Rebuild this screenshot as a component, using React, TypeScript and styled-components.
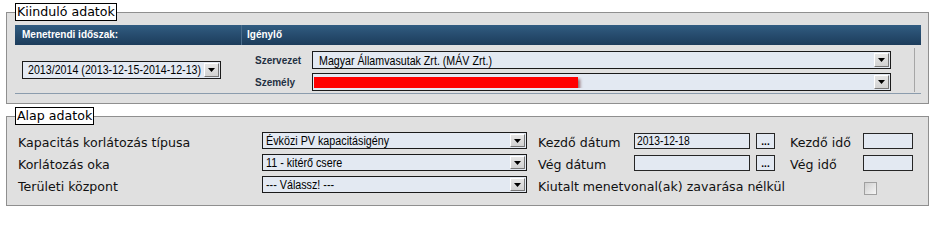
import React from "react";
import styled, { createGlobalStyle } from "styled-components";

const Global = createGlobalStyle`
  html, body { margin: 0; padding: 0; background: #fff; }
  body { font-family: "DejaVu Sans", Verdana, sans-serif; }
`;

const Page = styled.div`
  width: 932px;
  box-sizing: border-box;
  padding: 3px 3px 0 6px;
  display: flex;
  flex-direction: column;
  gap: 3px;
`;

const Group = styled.fieldset<{ $pt: number; $pb: number }>`
  margin: 0;
  min-width: 0;
  border: 1px solid #8f8f8f;
  background: #e0e0e0;
  padding: ${(p) => p.$pt}px 7px ${(p) => p.$pb}px 8px;
`;

const Legend = styled.legend`
  margin: 0;
  padding: 0 1px;
  background: #fff;
  border: 1px solid #000;
  color: #000;
  font: 12.6px/16px "DejaVu Sans", Verdana, sans-serif;
`;

/* ---------- Kiinduló adatok table ---------- */

const Table = styled.div`
  display: flex;
  flex-direction: column;
  border-bottom: 1px solid #8b9cad;
`;

const HeadRow = styled.div`
  display: grid;
  grid-template-columns: 226px 1fr;
  height: 20px;
  background: linear-gradient(#315c81, #1c3c5b);
  color: #fff;
  font: bold 10px/20px "Liberation Sans", Arial, sans-serif;
`;

const HeadCell = styled.div<{ $sep?: boolean }>`
  padding-left: ${(p) => (p.$sep ? 5 : 7)}px;
  border-left: ${(p) => (p.$sep ? "1px solid #4b6d8c" : "none")};
`;

const BodyRow = styled.div`
  display: grid;
  grid-template-columns: 226px 1fr;
  height: 48px;
`;

const PeriodCell = styled.div`
  display: flex;
  align-items: center;
  padding: 1px 0 0 7px;
`;

const RequesterCell = styled.div`
  padding: 3px 6px 0 0;
`;

const RequesterGrid = styled.div`
  display: grid;
  grid-template-columns: 57px 579px;
  row-gap: 4px;
  align-items: center;
  padding: 3px 0 1px 14px;
  border-right: 1px solid #a6a6a6;
`;

const SmallLabel = styled.span`
  font: bold 10px "Liberation Sans", Arial, sans-serif;
  color: #1f3043;
  white-space: nowrap;
`;

/* ---------- select look-alike ---------- */

const SelectBox = styled.div<{ $w: number; $h: number; $fs: number; $pl: number }>`
  box-sizing: border-box;
  width: ${(p) => p.$w}px;
  height: ${(p) => p.$h}px;
  border: 1px solid #1a1a1a;
  background: #e3e9f2;
  display: flex;
  align-items: center;
  padding-left: ${(p) => p.$pl}px;
  font: ${(p) => p.$fs}px "Liberation Sans", Arial, sans-serif;
  color: #000;
`;

const SelectText = styled.span`
  flex: 1;
  min-width: 0;
  white-space: nowrap;
  overflow: hidden;
  display: flex;
  align-items: center;
`;

/* Arial Narrow look: the narrow face is not installed, so the sans face is condensed */
const Narrow = styled.span<{ $sx: number }>`
  display: inline-block;
  white-space: nowrap;
  transform: scaleX(${(p) => p.$sx});
  transform-origin: left center;
`;

const ArrowBtn = styled.span`
  flex: none;
  box-sizing: border-box;
  width: 15px;
  height: calc(100% - 2px);
  margin-right: 1px;
  background: linear-gradient(#e6e6e6, #d2d2d2);
  border-top: 1px solid #fff;
  border-left: 1px solid #fff;
  border-right: 1px solid #777;
  border-bottom: 1px solid #777;
  display: flex;
  align-items: center;
  justify-content: center;
`;

const Redaction = styled.span`
  display: block;
  width: 264px;
  height: 11px;
  background: #ff0000;
  box-shadow: 2px 2px 3px rgba(70, 0, 0, 0.55);
`;

type SelectProps = {
  w: number;
  h: number;
  fs: number;
  pl: number;
  sx?: number;
  text?: string;
  children?: React.ReactNode;
};

const Select = ({ w, h, fs, pl, sx = 0.82, text, children }: SelectProps) => (
  <SelectBox $w={w} $h={h} $fs={fs} $pl={pl}>
    <SelectText>{text !== undefined ? <Narrow $sx={sx}>{text}</Narrow> : children}</SelectText>
    <ArrowBtn>
      <svg width="7" height="4" viewBox="0 0 7 4">
        <polygon points="0,0 7,0 3.5,4" fill="#000" />
      </svg>
    </ArrowBtn>
  </SelectBox>
);

/* ---------- Alap adatok form ---------- */

const FormGrid = styled.div`
  display: grid;
  grid-template-columns:
    [l1] 244px [sel] 265px 11px [l2] 96px [date] 116px 6px [btn] 19px 15px [l3] 73px [time] 50px [end];
  grid-auto-rows: 22px;
  padding-left: 3px;
`;

const FormLabel = styled.div<{ $col: string }>`
  grid-column: ${(p) => p.$col};
  font: 12.6px/22px "DejaVu Sans", Verdana, sans-serif;
  color: #111;
  white-space: nowrap;
`;

const Slot = styled.div<{ $col: string }>`
  grid-column: ${(p) => p.$col};
  display: flex;
  align-items: flex-start;
`;

const TextInput = styled.div`
  box-sizing: border-box;
  width: 100%;
  height: 16px;
  margin-top: 1px;
  border: 1px solid #262626;
  background: #e3e9f2;
  padding-left: 2px;
  overflow: hidden;
  font: 12px/14px "Liberation Sans", Arial, sans-serif;
  color: #000;
`;

const DotsButton = styled.div`
  box-sizing: border-box;
  width: 19px;
  height: 16px;
  margin-top: 1px;
  border: 1px solid #262626;
  background: #e3e9f2;
  display: flex;
  align-items: flex-end;
  justify-content: center;
  font: bold 10px/10px "Liberation Sans", Arial, sans-serif;
  color: #000;
  padding-bottom: 1px;
`;

const CheckBox = styled.span`
  box-sizing: border-box;
  display: block;
  width: 13px;
  height: 13px;
  margin: 6px 0 0 1px;
  border: 1px solid #a0a0a0;
  background: linear-gradient(135deg, #d0d0d0, #f6f6f6);
`;

export default function App() {
  return (
    <>
      <Global />
      <Page>
        <Group $pt={4} $pb={9}>
          <Legend>Kiinduló adatok</Legend>
          <Table>
            <HeadRow>
              <HeadCell>Menetrendi időszak:</HeadCell>
              <HeadCell $sep>Igénylő</HeadCell>
            </HeadRow>
            <BodyRow>
              <PeriodCell>
                <Select w={199} h={18} fs={13} pl={5} text="2013/2014 (2013-12-15-2014-12-13)" />
              </PeriodCell>
              <RequesterCell>
                <RequesterGrid>
                  <SmallLabel>Szervezet</SmallLabel>
                  <Select w={579} h={18} fs={13} pl={6} text="Magyar Államvasutak Zrt. (MÁV Zrt.)" />
                  <SmallLabel>Személy</SmallLabel>
                  <Select w={579} h={18} fs={13} pl={1}>
                    <Redaction />
                  </Select>
                </RequesterGrid>
              </RequesterCell>
            </BodyRow>
          </Table>
        </Group>

        <Group $pt={7} $pb={7}>
          <Legend>Alap adatok</Legend>
          <FormGrid>
            <FormLabel $col="l1">Kapacitás korlátozás típusa</FormLabel>
            <Slot $col="sel">
              <Select w={265} h={17} fs={12.5} pl={3} sx={0.86} text="Évközi PV kapacitásigény" />
            </Slot>
            <FormLabel $col="l2">Kezdő dátum</FormLabel>
            <Slot $col="date">
              <TextInput>
                <Narrow $sx={0.86}>2013-12-18</Narrow>
              </TextInput>
            </Slot>
            <Slot $col="btn">
              <DotsButton>...</DotsButton>
            </Slot>
            <FormLabel $col="l3">Kezdő idő</FormLabel>
            <Slot $col="time">
              <TextInput />
            </Slot>

            <FormLabel $col="l1">Korlátozás oka</FormLabel>
            <Slot $col="sel">
              <Select w={265} h={17} fs={12.5} pl={3} sx={0.86} text="11 - kitérő csere" />
            </Slot>
            <FormLabel $col="l2">Vég dátum</FormLabel>
            <Slot $col="date">
              <TextInput />
            </Slot>
            <Slot $col="btn">
              <DotsButton>...</DotsButton>
            </Slot>
            <FormLabel $col="l3">Vég idő</FormLabel>
            <Slot $col="time">
              <TextInput />
            </Slot>

            <FormLabel $col="l1">Területi központ</FormLabel>
            <Slot $col="sel">
              <Select w={265} h={17} fs={12.5} pl={3} sx={0.86} text="--- Válassz! ---" />
            </Slot>
            <FormLabel $col="l2 / time">Kiutalt menetvonal(ak) zavarása nélkül</FormLabel>
            <Slot $col="time">
              <CheckBox />
            </Slot>
          </FormGrid>
        </Group>
      </Page>
    </>
  );
}
